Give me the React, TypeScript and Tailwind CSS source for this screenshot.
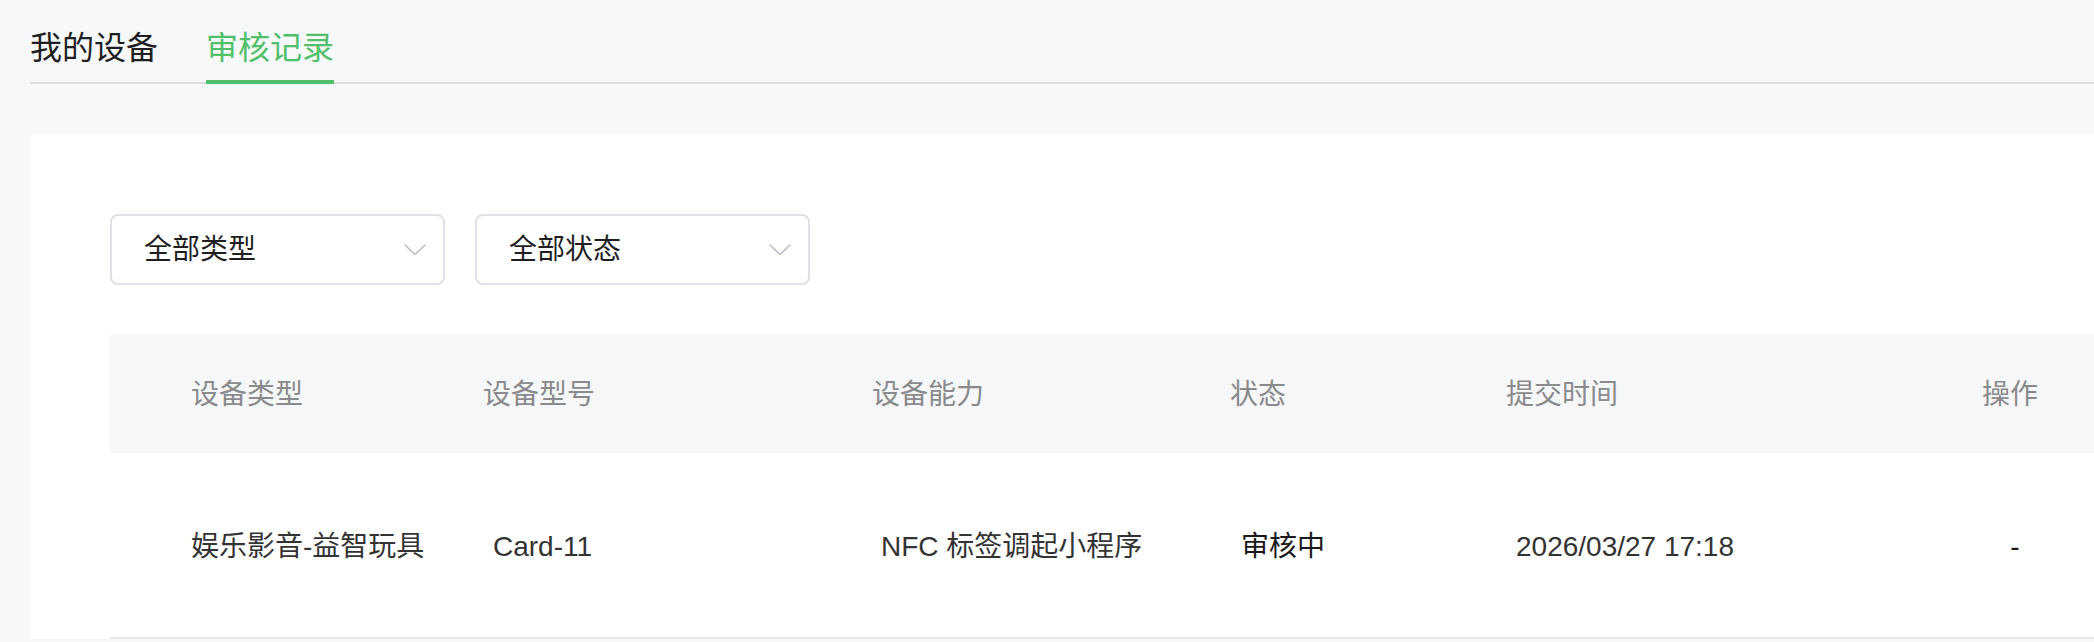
import React from "react";

const FONT = { fontFamily: '"Liberation Sans", "Noto Sans CJK SC", sans-serif' };

function Chevron() {
  return (
    <svg width="22" height="12" viewBox="0 0 22 12" fill="none">
      <path d="M1 1 L11 10.5 L21 1" stroke="#b9bdc5" strokeWidth="1.6" strokeLinecap="round" strokeLinejoin="round" />
    </svg>
  );
}

function Select({ label }: { label: string }) {
  return (
    <div className="flex h-[71px] w-[335px] items-center justify-between rounded-lg border-2 border-[#dfe1e6] bg-white pl-[32px] pr-[17px]">
      <span className="text-[28px] leading-[28px] text-[#1f1f1f]">{label}</span>
      <Chevron />
    </div>
  );
}

const cols = "grid grid-cols-[373px_389px_358px_276px_394px_220px]";

export default function App() {
  const headers = ["设备类型", "设备型号", "设备能力", "状态", "提交时间", "操作"];
  return (
    <div className="h-[642px] w-[2094px] overflow-hidden bg-[#f7f8fa]" style={FONT}>
      <div className="pl-[30px] pt-[32px]">
        <div className="flex gap-[48px] border-b-2 border-[#dcdde1]">
          <div className="pb-[16px] text-[32px] leading-[32px] text-[#1f1f1f]">我的设备</div>
          <div className="-mb-[2px] border-b-4 border-[#52bf6b] pb-[16px] text-[32px] leading-[32px] text-[#52bf6b]">审核记录</div>
        </div>
        <div className="mt-[50px] w-[2200px] rounded-tl-lg bg-white pl-[80px] pt-[80px]">
          <div className="flex gap-[30px]">
            <Select label="全部类型" />
            <Select label="全部状态" />
          </div>
          <div className="mt-[49px]">
            <div className={`${cols} h-[119px] items-center bg-[#f6f7f9] pt-[2px] text-[28px] leading-[28px] text-[#8a8a8c]`}>
              {headers.map((h, i) => (
                <div key={h} className={i === 0 ? "pl-[81px]" : i === 5 ? "text-center" : ""}>
                  {h}
                </div>
              ))}
            </div>
            <div className={`${cols} h-[186px] items-center border-b-2 border-[#e6e7eb] pt-[4px] text-[28px] leading-[28px] text-[#333333]`}>
              <div className="pl-[81px]">娱乐影音-益智玩具</div>
              <div className="pl-[10px]">Card-11</div>
              <div className="pl-[9px]">NFC 标签调起小程序</div>
              <div className="pl-[11px] text-[#1a1a1a]">审核中</div>
              <div className="pl-[10px]">2026/03/27 17:18</div>
              <div className="pl-[10px] text-center text-[#1a1a1a]">-</div>
            </div>
          </div>
        </div>
      </div>
    </div>
  );
}
